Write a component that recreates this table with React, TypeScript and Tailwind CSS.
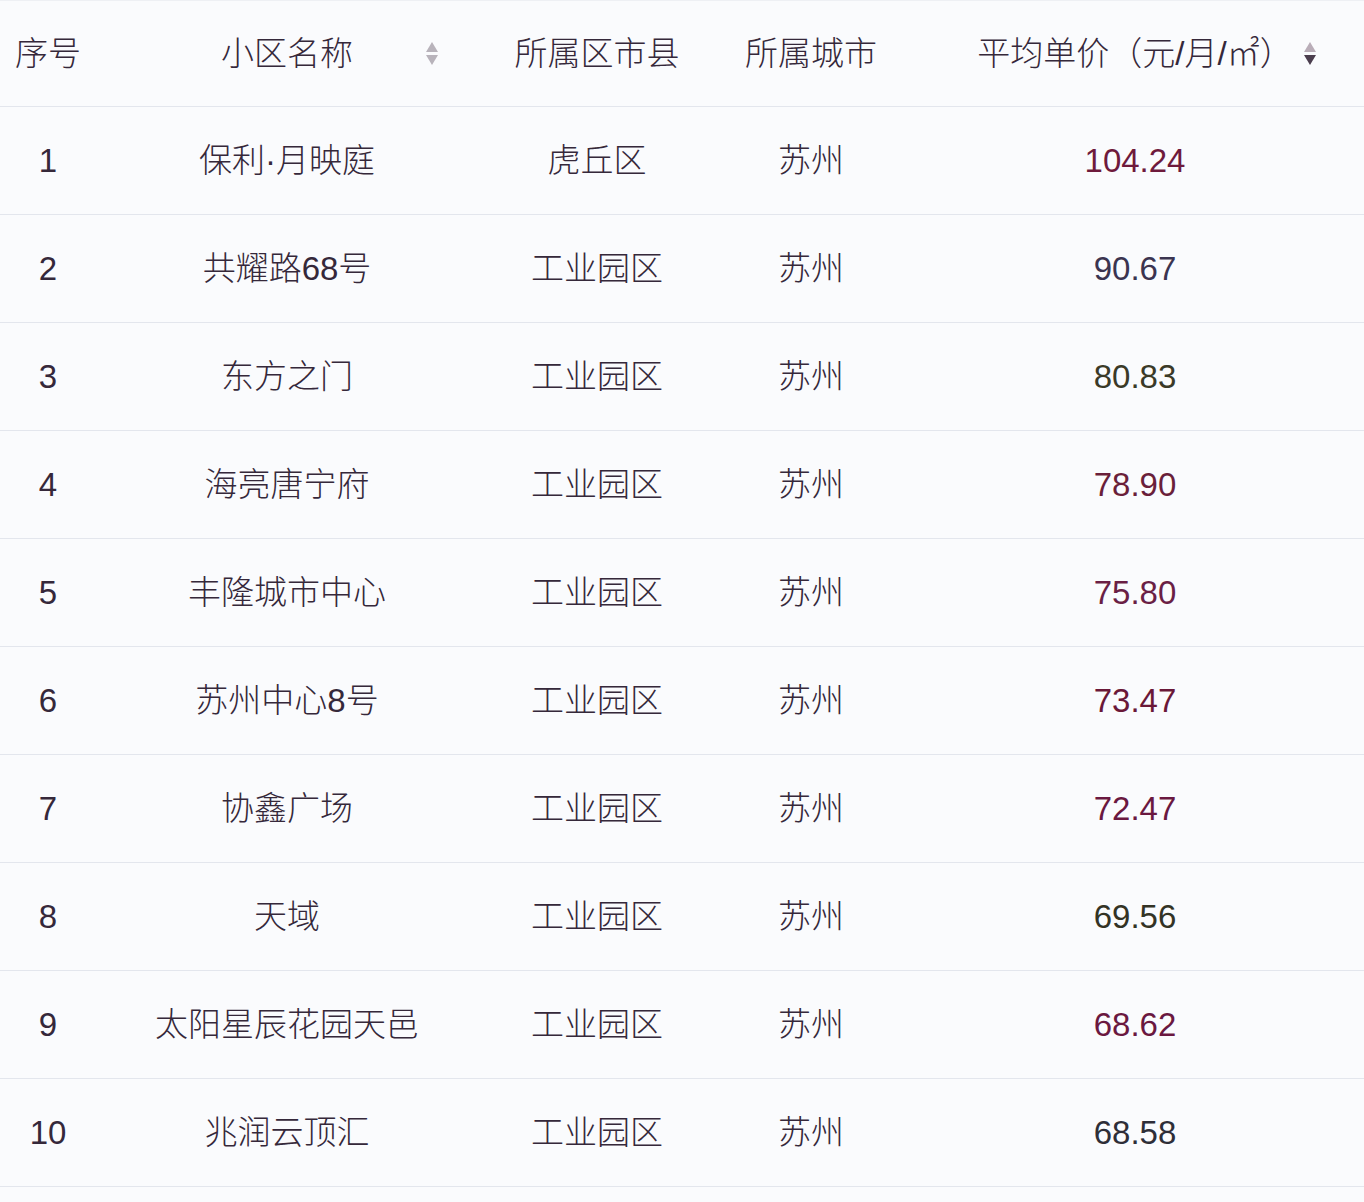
const rows = [
  { no: 1, name: '保利·月映庭', district: '虎丘区', city: '苏州', price: '104.24', color: 'text-[#6e1a3c]' },
  { no: 2, name: '共耀路68号', district: '工业园区', city: '苏州', price: '90.67', color: 'text-[#3b3450]' },
  { no: 3, name: '东方之门', district: '工业园区', city: '苏州', price: '80.83', color: 'text-[#3a3a28]' },
  { no: 4, name: '海亮唐宁府', district: '工业园区', city: '苏州', price: '78.90', color: 'text-[#6a1f3a]' },
  { no: 5, name: '丰隆城市中心', district: '工业园区', city: '苏州', price: '75.80', color: 'text-[#6a1f45]' },
  { no: 6, name: '苏州中心8号', district: '工业园区', city: '苏州', price: '73.47', color: 'text-[#6a1838]' },
  { no: 7, name: '协鑫广场', district: '工业园区', city: '苏州', price: '72.47', color: 'text-[#6a1840]' },
  { no: 8, name: '天域', district: '工业园区', city: '苏州', price: '69.56', color: 'text-[#333325]' },
  { no: 9, name: '太阳星辰花园天邑', district: '工业园区', city: '苏州', price: '68.62', color: 'text-[#6a1840]' },
  { no: 10, name: '兆润云顶汇', district: '工业园区', city: '苏州', price: '68.58', color: 'text-[#2e2e38]' },
];

const SortIcon = ({ active }: { active?: boolean }) => (
  <svg width="14" height="26" viewBox="0 0 14 26" className="shrink-0">
    <path d="M7 1 L13 11 L1 11 Z" fill={active ? '#b9adb8' : '#b8b3bb'} />
    <path d="M1 14 L13 14 L7 24 Z" fill={active ? '#4b3e4e' : '#b8b3bb'} />
  </svg>
);

const grid = 'grid grid-cols-[96px_382px_238px_190px_1fr] items-center';

export default function App() {
  return (
    <div
      className="min-h-[1202px] w-[1364px] bg-[#fafbfd] text-[#35283a] text-[33px] font-light border-t border-[#eef0f4]"
      style={{ fontFamily: '"Liberation Sans", "Noto Sans CJK SC", sans-serif' }}
    >
      <div className={`${grid} h-[106px] border-b border-[#e3e6ed]`}>
        <div className="text-center">序号</div>
        <div className="relative text-center">
          小区名称
          <span className="absolute right-[39px] top-1/2 -translate-y-1/2 flex">
            <SortIcon />
          </span>
        </div>
        <div className="text-center">所属区市县</div>
        <div className="text-center">所属城市</div>
        <div className="relative text-center">
          平均单价（元/月/㎡）
          <span className="absolute right-[47px] top-1/2 -translate-y-1/2 flex">
            <SortIcon active />
          </span>
        </div>
      </div>
      {rows.map((r) => (
        <div key={r.no} className={`${grid} h-[108px] border-b border-[#e3e6ed]`}>
          <div className="text-center">{r.no}</div>
          <div className="text-center">{r.name}</div>
          <div className="text-center">{r.district}</div>
          <div className="text-center">{r.city}</div>
          <div className={`text-center ${r.color}`}>{r.price}</div>
        </div>
      ))}
    </div>
  );
}
